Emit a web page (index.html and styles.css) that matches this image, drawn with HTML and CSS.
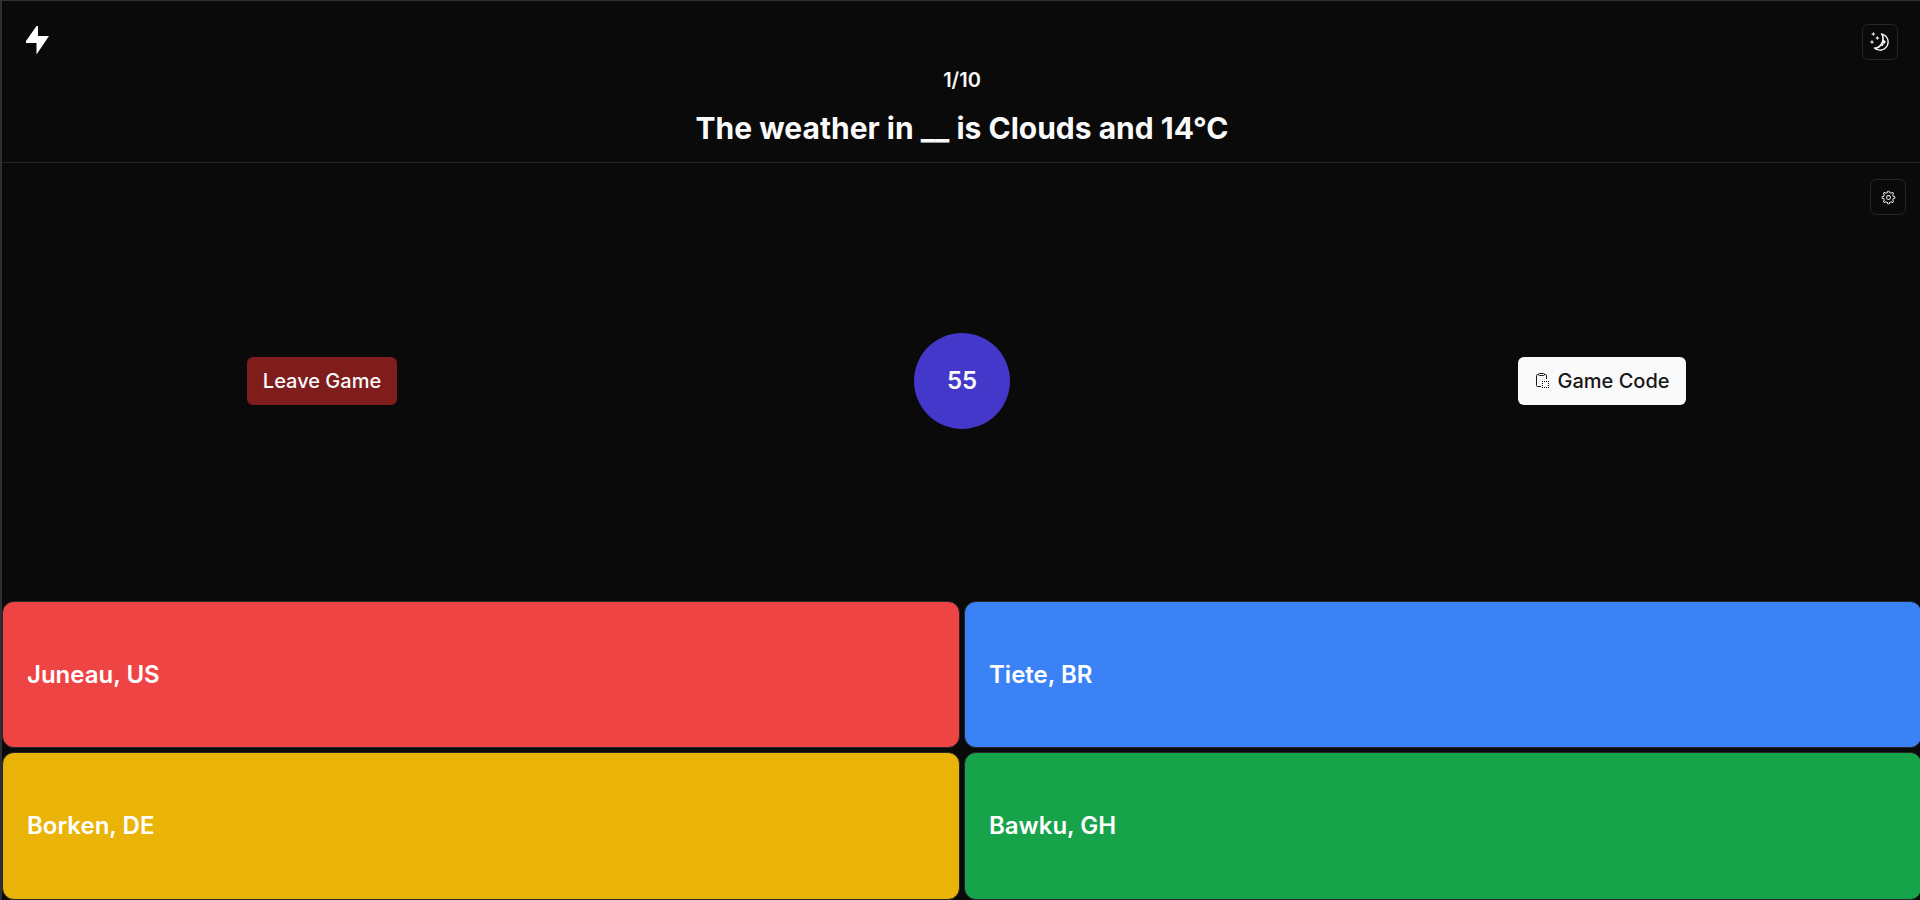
FILE: index.html
```html
<!DOCTYPE html>
<html lang="en">
<head>
<meta charset="utf-8">
<meta name="viewport" content="width=device-width, initial-scale=1">
<title>Weather Quiz</title>
<link rel="stylesheet" href="styles.css">
</head>
<body>
<div class="frame">
  <div class="game">
    <header class="header">
      <div class="toolbar">
        <a class="logo" href="#" aria-label="Home">
          <svg width="24" height="30" viewBox="0 0 24 30" fill="currentColor"><path d="M10.500 1H12v10h11L10.500 29.500V18H0v-2z"/></svg>
        </a>
        <button class="icon-button" type="button" aria-label="Toggle theme">
          <svg width="20" height="20" viewBox="0 0 15 15" fill="currentColor"><path fill-rule="evenodd" clip-rule="evenodd" d="M2.900.5a.4.4 0 0 0-.8 0v.6h-.6a.4.4 0 1 0 0 .8h.6v.6a.4.4 0 1 0 .8 0v-.6h.6a.4.4 0 0 0 0-.8h-.6V.5Zm3 3a.4.4 0 1 0-.8 0v.6h-.6a.4.4 0 1 0 0 .8h.6v.6a.4.4 0 1 0 .8 0v-.6h.6a.4.4 0 0 0 0-.8h-.6v-.6Zm-4 3a.4.4 0 1 0-.8 0v.6H.5a.4.4 0 1 0 0 .8h.6v.6a.4.4 0 0 0 .8 0v-.6h.6a.4.4 0 0 0 0-.8h-.6v-.6ZM8.250.940C8.030.920 7.910 1.170 8.030 1.340 8.770 2.410 9.200 3.700 9.200 5.100 9.200 8.630 6.430 11.500 2.960 11.690 2.750 11.700 2.630 11.950 2.780 12.110A6.600 6.600 0 1 0 8.250.940ZM10.400 5.300c0-1.020-.200-2-.570-2.890A5.600 5.600 0 0 1 13.100 7.500 5.600 5.600 0 0 1 7.500 13.100c-.870 0-1.690-.200-2.420-.550a7.610 7.610 0 0 0 3.660-2.510.750.750 0 1 0 .775-1.172l.177-.355A1.250 1.250 0 1 0 10.350 6.200c.034-.295.050-.595.050-.900Z"/></svg>
        </button>
      </div>
      <p class="progress">1/10</p>
      <h1 class="question">The weather in __ is Clouds and 14°C</h1>
    </header>

    <main class="stage">
      <button class="icon-button settings" type="button" aria-label="Settings">
        <svg width="15" height="15" viewBox="0 0 15 15" fill="currentColor"><path fill-rule="evenodd" clip-rule="evenodd" d="M7.070.650a.850.850 0 0 0-.828.662l-.238 1.050c-.380.110-.740.260-1.080.448l-.910-.574a.850.850 0 0 0-1.055.118l-.606.606a.850.850 0 0 0-.118 1.054l.574.912c-.187.338-.338.700-.447 1.079l-1.050.238a.850.850 0 0 0-.662.829v.857a.850.850 0 0 0 .662.829l1.050.238c.110.380.260.740.448 1.080l-.575.910a.850.850 0 0 0 .118 1.055l.607.606a.850.850 0 0 0 1.054.118l.911-.574c.339.187.700.337 1.079.447l.238 1.050a.850.850 0 0 0 .829.662h.857a.850.850 0 0 0 .829-.662l.238-1.050c.380-.110.740-.260 1.079-.447l.911.574a.850.850 0 0 0 1.054-.118l.606-.606a.850.850 0 0 0 .118-1.054l-.574-.911c.187-.339.338-.700.448-1.080l1.050-.238a.850.850 0 0 0 .662-.829v-.857a.850.850 0 0 0-.662-.830l-1.050-.237c-.110-.380-.260-.740-.447-1.080l.574-.910a.850.850 0 0 0-.118-1.055l-.606-.606a.850.850 0 0 0-1.055-.118l-.910.574a5.323 5.323 0 0 0-1.080-.448l-.239-1.050A.850.850 0 0 0 7.928.650h-.857ZM4.920 3.813a4.476 4.476 0 0 1 1.795-.745l.356-1.568h.857l.356 1.568c.660.121 1.268.380 1.795.744l1.360-.857.607.606-.858 1.360c.364.527.624 1.136.744 1.796l1.568.355v.857l-1.568.355a4.475 4.475 0 0 1-.744 1.796l.857 1.361-.606.606-1.361-.857a4.476 4.476 0 0 1-1.795.743L7.928 13.500h-.857l-.356-1.568a4.475 4.475 0 0 1-1.794-.744l-1.360.858-.607-.606.858-1.360a4.476 4.476 0 0 1-.744-1.796L1.500 7.929v-.857l1.568-.355a4.476 4.476 0 0 1 .744-1.796L2.954 3.560l.606-.606 1.360.858ZM9.026 7.500a1.525 1.525 0 1 1-3.050 0 1.525 1.525 0 0 1 3.050 0Zm.900 0a2.425 2.425 0 1 1-4.850 0 2.425 2.425 0 0 1 4.850 0Z"/></svg>
      </button>
      <button class="button button-leave" type="button">Leave Game</button>
      <div class="timer" role="timer">55</div>
      <button class="button button-code" type="button">
        <svg width="15" height="16" viewBox="0 0 15 16" fill="none" stroke="currentColor"><path d="M5 1.500H3.500a1 1 0 0 0-1 1v10a1 1 0 0 0 1 1H7M10 1.500h1.500a1 1 0 0 1 1 1V6"/><rect x="4.500" y=".5" width="6" height="2" rx="1"/><path stroke-dasharray="1 1" d="M8 8.500h7M8 14.500h7M8.500 10v4M14.500 10v4"/></svg>
        Game Code
      </button>
    </main>

    <section class="answers" aria-label="Answers">
      <button class="answer red" type="button">Juneau, US</button>
      <button class="answer blue" type="button">Tiete, BR</button>
      <button class="answer yellow" type="button">Borken, DE</button>
      <button class="answer green" type="button">Bawku, GH</button>
    </section>
  </div>
</div>
</body>
</html>
```
FILE: styles.css
```css
*,
*::before,
*::after {
  box-sizing: border-box;
}

body {
  margin: 0;
  background: #0a0a0a;
  color: #fafafa;
  font-family: Inter, "Liberation Sans", sans-serif;
}

button {
  font: inherit;
  color: inherit;
  cursor: pointer;
}

svg {
  display: block;
  flex: none;
}

.frame {
  min-height: 100vh;
  display: flex;
  overflow: hidden;
  border-top: 1px solid #2e2e36;
  border-left: 2px solid #2e2e36;
}

.game {
  flex: none;
  width: 100vw;
  display: flex;
  flex-direction: column;
}

.header {
  padding: 23px 24px 14px;
  border-bottom: 1px solid #262626;
  text-align: center;
}

.toolbar {
  display: flex;
  justify-content: space-between;
  align-items: flex-start;
}

.logo {
  color: #fff;
  padding-top: 1px;
}

.icon-button {
  width: 36px;
  height: 36px;
  display: grid;
  place-items: center;
  padding: 0;
  border: 1px solid #262626;
  border-radius: 6px;
  background: transparent;
}

.progress {
  margin: 6px 0 14px;
  font-size: 20px;
  line-height: 28px;
  font-weight: 600;
}

.question {
  margin: 0;
  font-size: 30px;
  line-height: 40px;
  font-weight: 700;
}

.stage {
  position: relative;
  flex: 1;
  display: grid;
  grid-template-columns: repeat(3, 1fr);
  place-items: center;
  padding-bottom: 2px;
}

.settings {
  position: absolute;
  top: 16px;
  right: 16px;
}

.button {
  height: 48px;
  display: flex;
  align-items: center;
  gap: 8px;
  padding: 0 16px;
  border: 0;
  border-radius: 6px;
  font-size: 20px;
  line-height: 28px;
  font-weight: 500;
}

.button-leave {
  background: #7f1d1d;
}

.button-code {
  background: #fafafa;
  color: #171717;
}

.timer {
  width: 96px;
  height: 96px;
  display: grid;
  place-items: center;
  border-radius: 50%;
  background: #4338ca;
  font-size: 24px;
  line-height: 32px;
  font-weight: 600;
}

.answers {
  display: grid;
  grid-template-columns: repeat(2, 1fr);
  grid-template-rows: 147px 148px;
  gap: 4px;
}

.answer {
  padding: 0 24px;
  border: 1px solid #262626;
  border-radius: 12px;
  font-size: 24px;
  line-height: 24px;
  font-weight: 600;
  text-align: left;
  color: #fff;
}

.red {
  background: #ef4444;
}

.blue {
  background: #3b82f6;
}

.yellow {
  background: #eab308;
}

.green {
  background: #16a34a;
}
```
